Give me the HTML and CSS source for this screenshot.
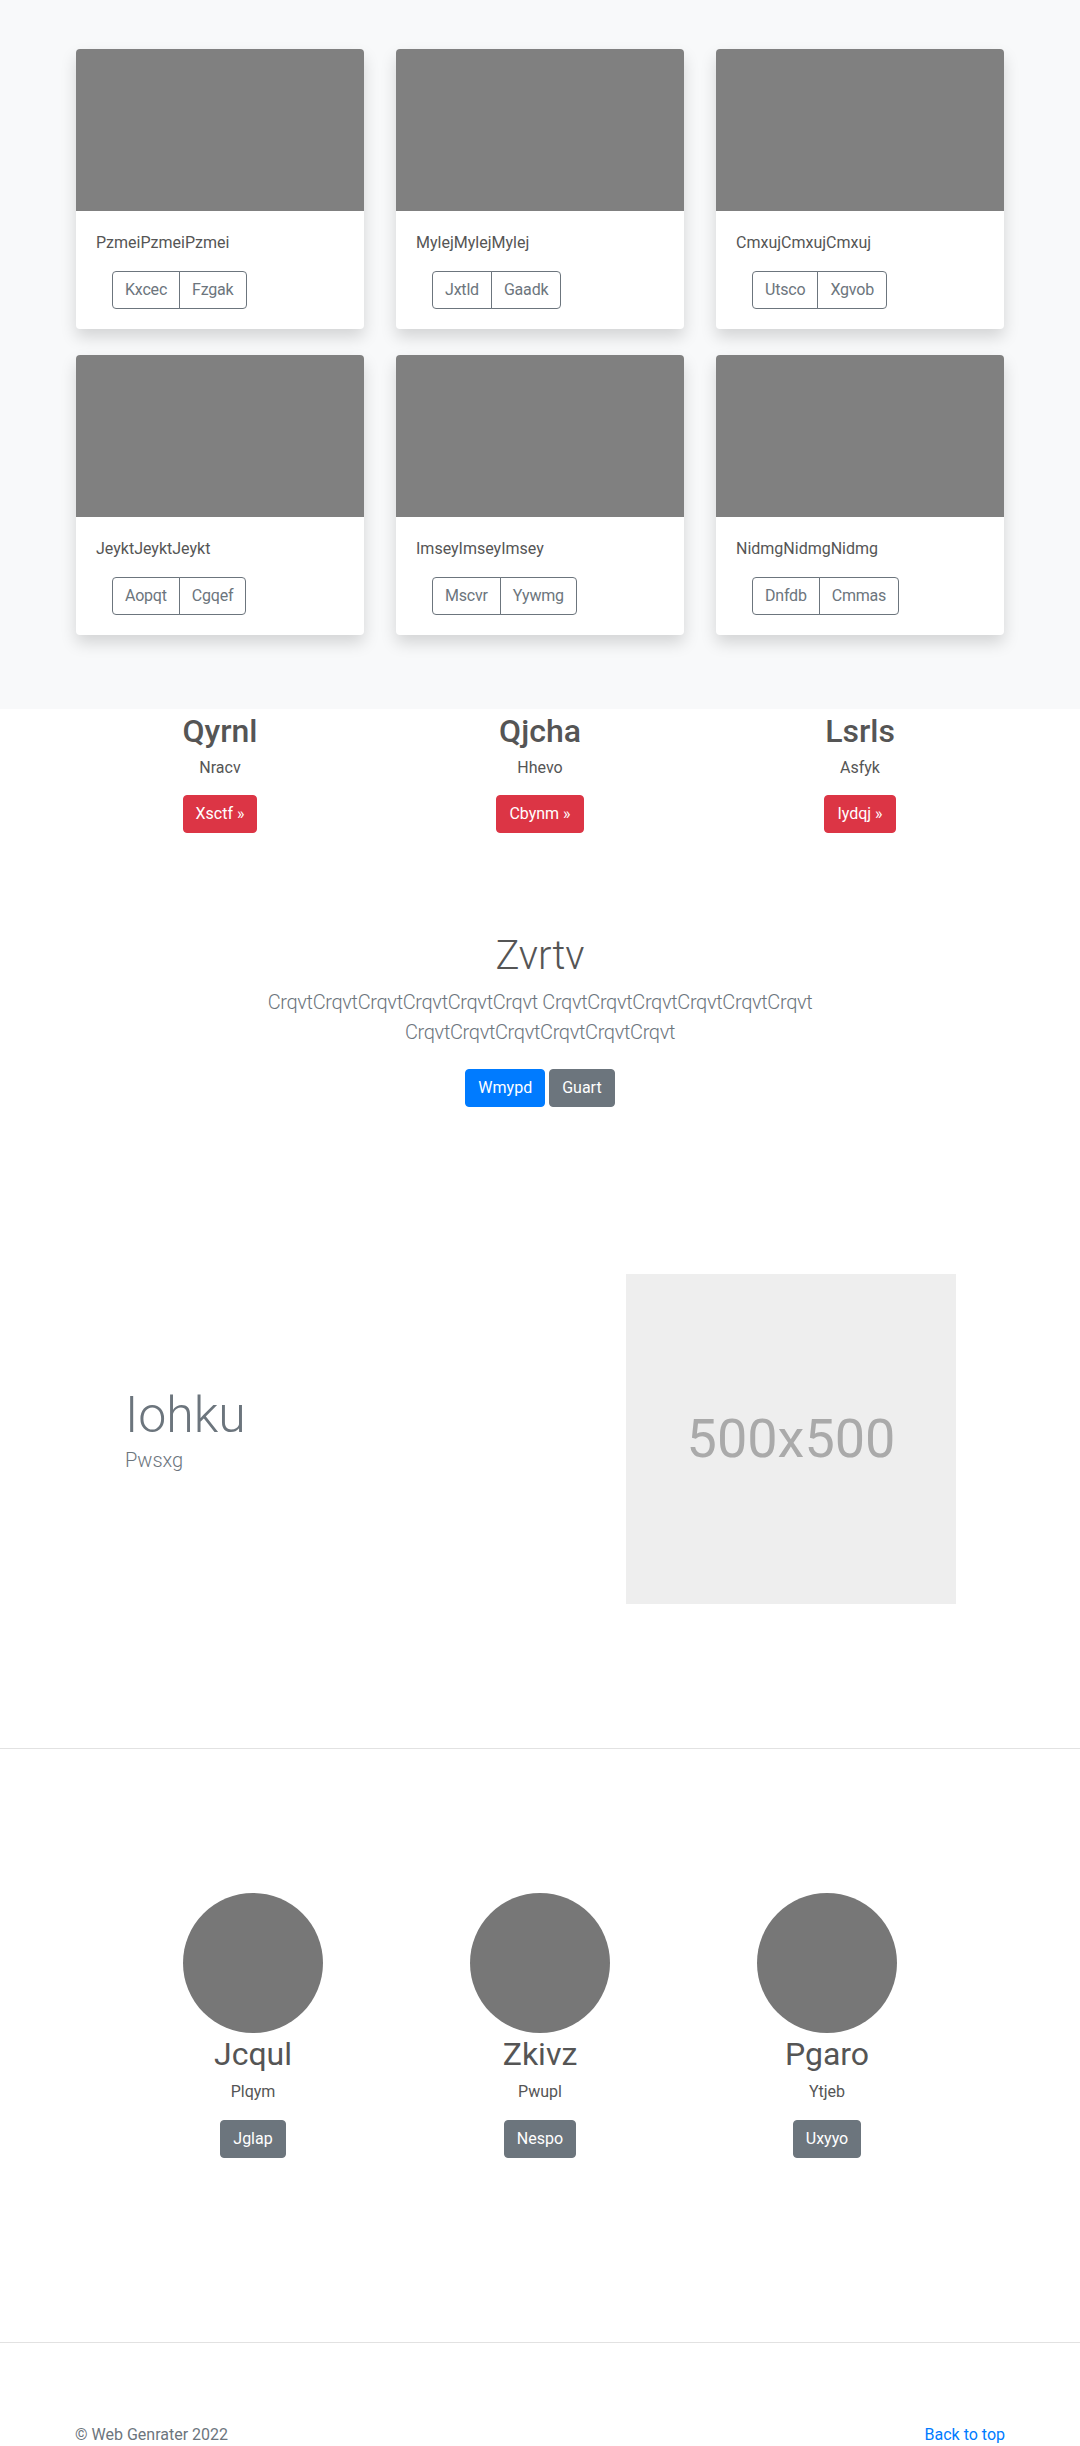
FILE: index.html
```html
<!DOCTYPE html>
<html lang="en">
<head>
<meta charset="utf-8">
<title>Album</title>
<link rel="stylesheet" href="styles.css">
</head>
<body>
<main>
  <section class="album">
    <div class="cards">
      <div class="card">
        <div class="card-img"></div>
        <div class="card-body">
          <p class="card-text">PzmeiPzmeiPzmei</p>
          <div class="btn-group"><a class="btn btn-outline">Kxcec</a><a class="btn btn-outline">Fzgak</a></div>
        </div>
      </div>
      <div class="card">
        <div class="card-img"></div>
        <div class="card-body">
          <p class="card-text">MylejMylejMylej</p>
          <div class="btn-group"><a class="btn btn-outline">Jxtld</a><a class="btn btn-outline">Gaadk</a></div>
        </div>
      </div>
      <div class="card">
        <div class="card-img"></div>
        <div class="card-body">
          <p class="card-text">CmxujCmxujCmxuj</p>
          <div class="btn-group"><a class="btn btn-outline">Utsco</a><a class="btn btn-outline">Xgvob</a></div>
        </div>
      </div>
      <div class="card">
        <div class="card-img"></div>
        <div class="card-body">
          <p class="card-text">JeyktJeyktJeykt</p>
          <div class="btn-group"><a class="btn btn-outline">Aopqt</a><a class="btn btn-outline">Cgqef</a></div>
        </div>
      </div>
      <div class="card">
        <div class="card-img"></div>
        <div class="card-body">
          <p class="card-text">ImseyImseyImsey</p>
          <div class="btn-group"><a class="btn btn-outline">Mscvr</a><a class="btn btn-outline">Yywmg</a></div>
        </div>
      </div>
      <div class="card">
        <div class="card-img"></div>
        <div class="card-body">
          <p class="card-text">NidmgNidmgNidmg</p>
          <div class="btn-group"><a class="btn btn-outline">Dnfdb</a><a class="btn btn-outline">Cmmas</a></div>
        </div>
      </div>
    </div>
  </section>

  <section class="features">
    <div class="feature">
      <h2>Qyrnl</h2>
      <p>Nracv</p>
      <a class="btn btn-danger">Xsctf &raquo;</a>
    </div>
    <div class="feature">
      <h2>Qjcha</h2>
      <p>Hhevo</p>
      <a class="btn btn-danger">Cbynm &raquo;</a>
    </div>
    <div class="feature">
      <h2>Lsrls</h2>
      <p>Asfyk</p>
      <a class="btn btn-danger">Iydqj &raquo;</a>
    </div>
  </section>

  <section class="hero">
    <h1>Zvrtv</h1>
    <p class="lead hero-lead">CrqvtCrqvtCrqvtCrqvtCrqvtCrqvt CrqvtCrqvtCrqvtCrqvtCrqvtCrqvt CrqvtCrqvtCrqvtCrqvtCrqvtCrqvt</p>
    <div class="hero-actions">
      <a class="btn btn-primary">Wmypd</a>
      <a class="btn btn-secondary">Guart</a>
    </div>
  </section>

  <section class="featurette">
    <div class="featurette-text">
      <h2>Iohku</h2>
      <p class="lead">Pwsxg</p>
    </div>
    <div class="placeholder"><span>500x500</span></div>
  </section>

  <hr class="divider">

  <section class="team">
    <div class="member">
      <div class="avatar"></div>
      <h2>Jcqul</h2>
      <p>Plqym</p>
      <a class="btn btn-secondary">Jglap</a>
    </div>
    <div class="member">
      <div class="avatar"></div>
      <h2>Zkivz</h2>
      <p>Pwupl</p>
      <a class="btn btn-secondary">Nespo</a>
    </div>
    <div class="member">
      <div class="avatar"></div>
      <h2>Pgaro</h2>
      <p>Ytjeb</p>
      <a class="btn btn-secondary">Uxyyo</a>
    </div>
  </section>

  <hr class="divider">
</main>

<footer class="footer">
  <p class="copy">&copy; Web Genrater 2022</p>
  <a class="back" href="#">Back to top</a>
</footer>
</body>
</html>
```

FILE: styles.css
```css
* { box-sizing: border-box; }

body {
  margin: 0;
  font-family: "Segoe UI", Roboto, "Helvetica Neue", Arial, "Noto Sans", sans-serif;
  font-size: 16px;
  line-height: 1.5;
  color: #555;
  background: #fff;
}

p { margin: 0; }
h1, h2 { margin: 0; }

/* Buttons */
.btn {
  display: inline-block;
  padding: 6px 12px;
  font-size: 16px;
  line-height: 24px;
  border: 1px solid transparent;
  border-radius: 4px;
  text-decoration: none;
  cursor: pointer;
  white-space: nowrap;
}
.btn-outline { color: #6c757d; border-color: #6c757d; background: transparent; }
.btn-danger { color: #fff; background: #dc3545; border-color: #dc3545; }
.btn-primary { color: #fff; background: #007bff; border-color: #007bff; }
.btn-secondary { color: #fff; background: #6c757d; border-color: #6c757d; }

.btn-group { display: flex; margin-left: 16px; }
.btn-group .btn { border-radius: 0; letter-spacing: -0.2px; }
.btn-group .btn:first-child { border-radius: 4px 0 0 4px; }
.btn-group .btn:last-child { border-radius: 0 4px 4px 0; margin-left: -1px; }

/* Album */
.album {
  background: #f8f9fa;
  padding: 49px 0 74px;
}
.cards {
  width: 928px;
  margin: 0 auto;
  display: grid;
  grid-template-columns: repeat(3, 288px);
  column-gap: 32px;
  row-gap: 26px;
}
.card {
  background: #fff;
  border-radius: 4px;
  overflow: hidden;
  box-shadow: 0 8px 16px rgba(0, 0, 0, 0.15);
}
.card-img {
  height: 162px;
  background: #808080;
}
.card-body { padding: 20px; }
.card-text { margin-bottom: 16px; }

/* Features */
.features {
  width: 960px;
  margin: 0 auto;
  padding-top: 3px;
  display: grid;
  grid-template-columns: repeat(3, 1fr);
  text-align: center;
}
.feature h2 {
  font-size: 32px;
  font-weight: 500;
  line-height: 1.2;
  margin-bottom: 6px;
}
.feature p { margin-bottom: 15px; }

/* Hero */
.hero {
  padding-top: 99px;
  text-align: center;
}
.hero h1 {
  font-size: 40px;
  font-weight: 300;
  line-height: 1.2;
  margin-bottom: 7px;
}
.lead {
  font-size: 20px;
  font-weight: 300;
  line-height: 30px;
  color: #6c757d;
}
.hero-lead {
  max-width: 700px;
  margin: 0 auto 22px;
  letter-spacing: -0.35px;
}
.hero-actions {
  display: flex;
  justify-content: center;
  gap: 4px;
}

/* Featurette */
.featurette {
  width: 831px;
  margin: 167px 0 144px 125px;
  display: flex;
  justify-content: space-between;
  align-items: center;
}
.featurette-text h2 {
  font-size: 50px;
  font-weight: 300;
  line-height: 60px;
  color: #6c757d;
}
.featurette-text .lead { margin-bottom: 19px; }
.placeholder {
  width: 330px;
  height: 330px;
  background: #eee;
  display: flex;
  align-items: center;
  justify-content: center;
}
.placeholder span {
  font-size: 54px;
  color: #aaa;
  line-height: 1;
}

.divider {
  margin: 0;
  border: 0;
  border-top: 1px solid #e2e2e2;
}

/* Team */
.team {
  width: 861px;
  margin: 0 auto;
  padding: 144px 0 184px;
  display: grid;
  grid-template-columns: repeat(3, 1fr);
  text-align: center;
}
.avatar {
  width: 140px;
  height: 140px;
  border-radius: 50%;
  background: #777;
  margin: 0 auto 2px;
}
.member h2 {
  font-size: 32px;
  font-weight: 400;
  line-height: 1.2;
  margin-bottom: 6px;
}
.member p { margin-bottom: 16px; }

/* Footer */
.footer {
  width: 930px;
  margin: 0 auto;
  padding: 80px 0 48px;
  display: flex;
  justify-content: space-between;
  align-items: flex-start;
}
.copy { color: #6c757d; }
.back { color: #007bff; text-decoration: none; }
```
